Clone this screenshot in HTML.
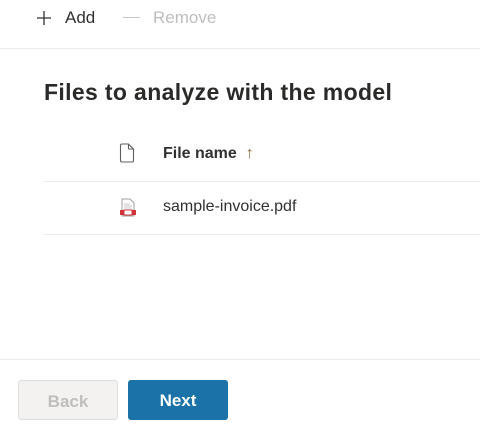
<!DOCTYPE html>
<html><head><style>
body{margin:0;width:480px;height:447px;background:#fff;font-family:"Liberation Sans",sans-serif;color:#323130;position:relative;overflow:hidden}
.a{position:absolute;white-space:nowrap}
.line{position:absolute;height:1px;background:#edebe9}
.btn{position:absolute;top:380px;width:100px;height:40px;border-radius:3px;box-sizing:border-box;font-weight:bold;font-size:17px;text-align:center;line-height:42px}
</style></head><body>
<svg class="a" style="left:36px;top:10px" width="16" height="16" viewBox="0 0 16 16"><path d="M8 1v14M1 8h14" stroke="#323130" stroke-width="1.3"/></svg>
<div class="a" style="left:65px;top:8px;font-size:17px">Add</div>
<div class="a" style="left:123px;top:17px;width:17px;height:1px;background:#c8c6c4"></div>
<div class="a" style="left:153px;top:8px;font-size:17px;color:#c0bebc">Remove</div>
<div class="line" style="left:0;top:48px;width:480px"></div>
<div class="a" style="left:44px;top:79px;font-size:23px;font-weight:bold;letter-spacing:0.35px;color:#2b2a29">Files to analyze with the model</div>
<svg class="a" style="left:119px;top:143px" width="16" height="20" viewBox="0 0 16 20"><path d="M1.5 2.5a1.5 1.5 0 0 1 1.5-1.5h6.5l5 5v11.5a1.5 1.5 0 0 1-1.5 1.5h-10a1.5 1.5 0 0 1-1.5-1.5z" fill="none" stroke="#605e5c" stroke-width="1.1"/><path d="M9.5 1v4.5a.5.5 0 0 0 .5.5h4.5" fill="none" stroke="#605e5c" stroke-width="1.1"/></svg>
<div class="a" style="left:163px;top:145px;font-size:16px;font-weight:bold">File name &nbsp;<span style="font-weight:normal;color:#8a6a3a">↑</span></div>
<div class="line" style="left:43px;top:181px;width:437px"></div>
<svg class="a" style="left:120px;top:198px" width="16" height="19" viewBox="0 0 16 19"><path d="M2 1h8l4 4v13H2z" fill="#fff" stroke="#a19f9d"/><path d="M4 6h6M4 8h8M4 10h8" stroke="#c8c6c4"/><rect x="0" y="12" width="16" height="5" fill="#d13438"/><rect x="4" y="12" width="8" height="5" fill="#fff" stroke="#d13438"/></svg>
<div class="a" style="left:163px;top:198px;font-size:16px">sample-invoice.pdf</div>
<div class="line" style="left:43px;top:234px;width:437px"></div>
<div class="line" style="left:0;top:359px;width:480px"></div>
<div class="btn" style="left:18px;background:#f3f2f1;border:1px solid #e1dfdd;color:#c0bebc">Back</div>
<div class="btn" style="left:128px;background:#1b72a8;color:#fff">Next</div>
</body></html>
